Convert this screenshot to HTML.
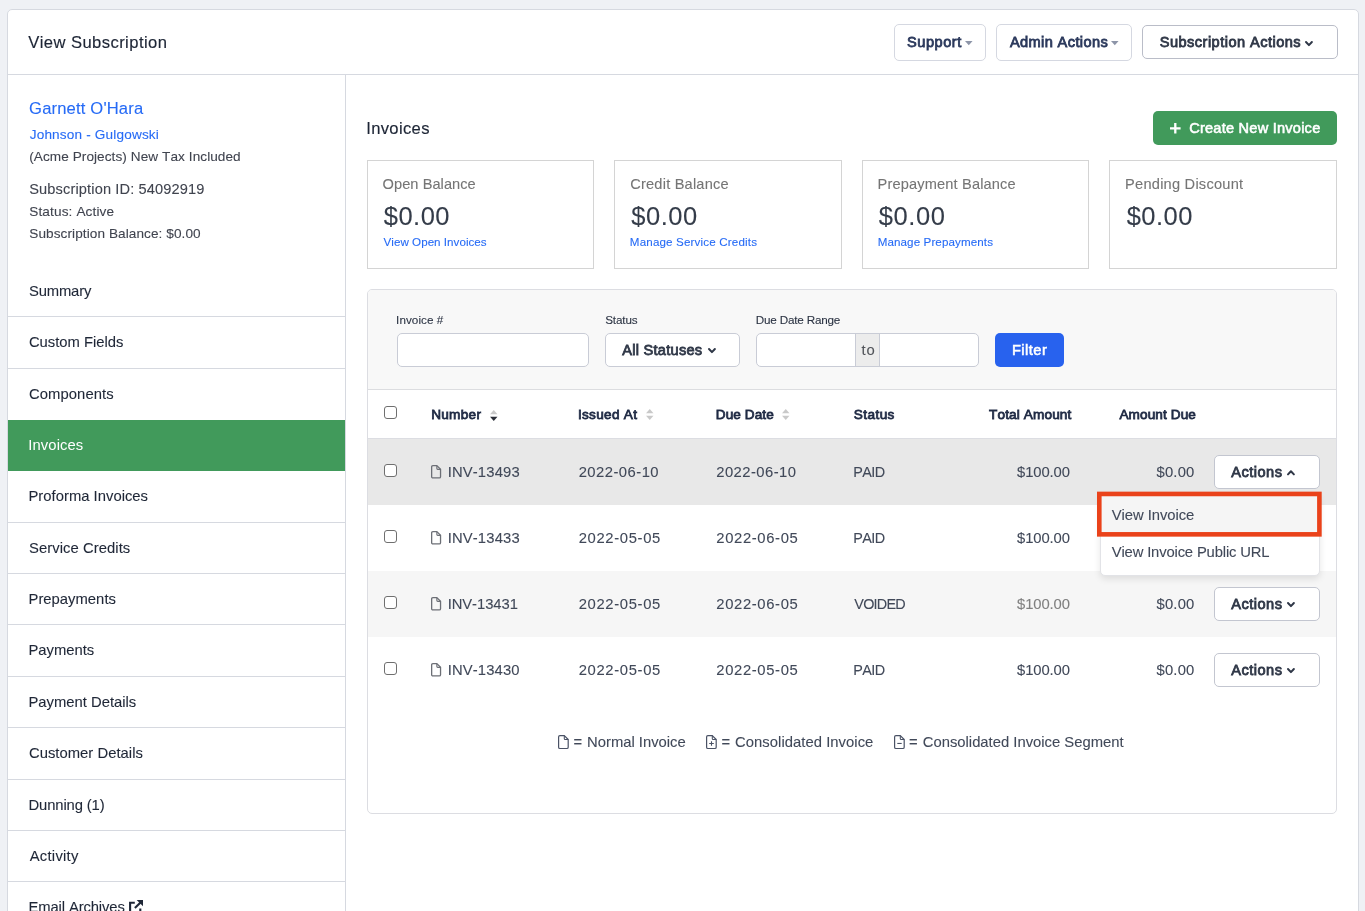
<!DOCTYPE html>
<html lang="en">
<head>
<meta charset="utf-8">
<title>View Subscription</title>
<style>
*{box-sizing:border-box;margin:0;padding:0}
html,body{width:1365px;height:911px;overflow:hidden}
body{background:#eff1f5;font-family:"Liberation Sans",sans-serif;color:#3d4556;font-size:14px;position:relative;font-kerning:none}
a{text-decoration:none}
.t{position:absolute;white-space:nowrap;-webkit-text-stroke:.1px currentColor}
#w{position:absolute;left:0;top:0;width:1365px;height:911px;overflow:hidden;will-change:transform}
svg{position:absolute;overflow:visible}
</style>
</head>
<body>
<div id="w">
<div style="position:absolute;left:7px;top:9px;width:1352.00px;height:931.00px;background:#fff;border:1px solid #d6d9e0;border-radius:5px"></div>
<div style="position:absolute;left:8px;top:74px;width:1350.00px;height:1.00px;background:#d6d9e0"></div>
<div class="t" style="left:28.25px;top:33px;font-size:16.6px;line-height:19px;letter-spacing:0.423px;color:#1d2535;-webkit-text-stroke:.15px #1d2535;">View Subscription</div>
<div style="position:absolute;left:894px;top:24px;width:92.00px;height:37.00px;background:#fff;border:1px solid #d5d8e1;border-radius:5px"></div>
<div class="t" style="left:906.99px;top:34px;font-size:14.6px;line-height:16px;letter-spacing:0.522px;color:#2b395c;-webkit-text-stroke:0.8px currentColor;">Support</div>
<svg style="left:965.4px;top:40.7px" width="7.6" height="4.2" viewBox="0 0 7.6 4.2"><path d="M0 0H7.6L3.8 4.2Z" fill="#8d95a8"/></svg>
<div style="position:absolute;left:996px;top:24px;width:136.00px;height:37.00px;background:#fff;border:1px solid #d5d8e1;border-radius:5px"></div>
<div class="t" style="left:1009.92px;top:34px;font-size:14.6px;line-height:16px;letter-spacing:0.378px;color:#2b395c;-webkit-text-stroke:0.8px currentColor;">Admin Actions</div>
<svg style="left:1111.1px;top:40.7px" width="7.6" height="4.2" viewBox="0 0 7.6 4.2"><path d="M0 0H7.6L3.8 4.2Z" fill="#8d95a8"/></svg>
<div style="position:absolute;left:1142px;top:25px;width:196.00px;height:34.00px;background:#fff;border:1px solid #babdc8;border-radius:5px"></div>
<div class="t" style="left:1159.79px;top:34px;font-size:14.6px;line-height:16px;letter-spacing:0.453px;color:#2f3747;-webkit-text-stroke:0.8px currentColor;">Subscription Actions</div>
<svg style="left:1305.3px;top:40.5px" width="7.9" height="5.4" viewBox="0 0 7.9 5.4"><path d="M1.0 1.0 L3.95 4.1000000000000005 L6.9 1.0" fill="none" stroke="#2f3747" stroke-width="2.0" stroke-linecap="round" stroke-linejoin="round"/></svg>
<div style="position:absolute;left:345px;top:75px;width:1.00px;height:836.00px;background:#d6d9e0"></div>
<a class="t" style="left:29.07px;top:99px;font-size:16.6px;line-height:19px;letter-spacing:0.162px;color:#266bf6;">Garnett O'Hara</a>
<a class="t" style="left:29.69px;top:127px;font-size:13.6px;line-height:15px;letter-spacing:0.166px;color:#266bf6;">Johnson - Gulgowski</a>
<div class="t" style="left:29.16px;top:149px;font-size:13.6px;line-height:15px;letter-spacing:0.073px;color:#40444f;">(Acme Projects) New Tax Included</div>
<div class="t" style="left:29.24px;top:181px;font-size:14.6px;line-height:16px;letter-spacing:0.133px;color:#40444f;">Subscription ID: 54092919</div>
<div class="t" style="left:29.28px;top:204px;font-size:13.6px;line-height:15px;letter-spacing:0.129px;color:#40444f;">Status: Active</div>
<div class="t" style="left:29.28px;top:226px;font-size:13.6px;line-height:15px;letter-spacing:0.080px;color:#40444f;">Subscription Balance: $0.00</div>
<div style="position:absolute;left:8px;top:316px;width:337.00px;height:1.00px;background:#d6d9e0"></div>
<div style="position:absolute;left:8px;top:368px;width:337.00px;height:1.00px;background:#d6d9e0"></div>
<div style="position:absolute;left:8px;top:522px;width:337.00px;height:1.00px;background:#d6d9e0"></div>
<div style="position:absolute;left:8px;top:573px;width:337.00px;height:1.00px;background:#d6d9e0"></div>
<div style="position:absolute;left:8px;top:624px;width:337.00px;height:1.00px;background:#d6d9e0"></div>
<div style="position:absolute;left:8px;top:676px;width:337.00px;height:1.00px;background:#d6d9e0"></div>
<div style="position:absolute;left:8px;top:727px;width:337.00px;height:1.00px;background:#d6d9e0"></div>
<div style="position:absolute;left:8px;top:779px;width:337.00px;height:1.00px;background:#d6d9e0"></div>
<div style="position:absolute;left:8px;top:830px;width:337.00px;height:1.00px;background:#d6d9e0"></div>
<div style="position:absolute;left:8px;top:881px;width:337.00px;height:1.00px;background:#d6d9e0"></div>
<div style="position:absolute;left:8px;top:420px;width:337.00px;height:51.00px;background:#419a5b"></div>
<div class="t" style="left:29.03px;top:283px;font-size:14.8px;line-height:16px;letter-spacing:-0.170px;color:#1f2737;">Summary</div>
<div class="t" style="left:28.95px;top:334px;font-size:14.8px;line-height:16px;letter-spacing:0.000px;color:#1f2737;">Custom Fields</div>
<div class="t" style="left:28.95px;top:386px;font-size:14.8px;line-height:16px;letter-spacing:0.097px;color:#1f2737;">Components</div>
<div class="t" style="left:28.28px;top:437px;font-size:14.8px;line-height:16px;letter-spacing:0.101px;color:#fff;-webkit-text-stroke:0;">Invoices</div>
<div class="t" style="left:28.49px;top:488px;font-size:14.8px;line-height:16px;letter-spacing:0.018px;color:#1f2737;">Proforma Invoices</div>
<div class="t" style="left:29.03px;top:540px;font-size:14.8px;line-height:16px;letter-spacing:0.062px;color:#1f2737;">Service Credits</div>
<div class="t" style="left:28.49px;top:591px;font-size:14.8px;line-height:16px;letter-spacing:0.025px;color:#1f2737;">Prepayments</div>
<div class="t" style="left:28.49px;top:642px;font-size:14.8px;line-height:16px;letter-spacing:-0.022px;color:#1f2737;">Payments</div>
<div class="t" style="left:28.49px;top:694px;font-size:14.8px;line-height:16px;letter-spacing:-0.000px;color:#1f2737;">Payment Details</div>
<div class="t" style="left:28.95px;top:745px;font-size:14.8px;line-height:16px;letter-spacing:0.032px;color:#1f2737;">Customer Details</div>
<div class="t" style="left:28.49px;top:797px;font-size:14.8px;line-height:16px;letter-spacing:-0.120px;color:#1f2737;">Dunning (1)</div>
<div class="t" style="left:29.67px;top:848px;font-size:14.8px;line-height:16px;letter-spacing:0.269px;color:#1f2737;">Activity</div>
<div class="t" style="left:28.49px;top:899px;font-size:14.8px;line-height:16px;letter-spacing:-0.117px;color:#1f2737;">Email Archives</div>
<svg style="left:128.9px;top:899.6px" width="14" height="14" viewBox="0 0 14 14" fill="none" stroke="#1f2737" stroke-width="2.1"><path d="M5.8 2.7H1.1V12.9H11.300V8.400"/><path d="M5.900 8.100L12.300 1.700"/><path d="M7.700 0H14V6.300Z" fill="#1f2737" stroke="none"/></svg>
<div class="t" style="left:366.19px;top:119px;font-size:16.6px;line-height:19px;letter-spacing:0.341px;color:#1d2535;-webkit-text-stroke:.15px #1d2535;">Invoices</div>
<div style="position:absolute;left:1153px;top:111px;width:184.00px;height:34.00px;background:#419a5b;border-radius:5px"></div>
<svg style="left:1170.2px;top:122.5px" width="10.6" height="10.6" viewBox="0 0 10.6 10.6"><path d="M5.3 0V10.6M0 5.3H10.6" stroke="#fff" stroke-width="2.3" fill="none"/></svg>
<div class="t" style="left:1189.18px;top:120px;font-size:14.6px;line-height:16px;letter-spacing:0.220px;color:#fff;-webkit-text-stroke:0.8px currentColor;-webkit-text-stroke:.55px #fff;">Create New Invoice</div>
<div style="position:absolute;left:367px;top:160px;width:227.00px;height:109.00px;background:#fff;border:1px solid #d4d4d4"></div>
<div class="t" style="left:382.61px;top:176px;font-size:14.6px;line-height:16px;letter-spacing:0.055px;color:#757575;">Open Balance</div>
<div class="t" style="left:383.83px;top:202px;font-size:25.5px;line-height:28px;letter-spacing:0.464px;color:#343c49;">$0.00</div>
<a class="t" style="left:383.55px;top:235px;font-size:11.6px;line-height:13px;letter-spacing:0.038px;color:#266bf6;">View Open Invoices</a>
<div style="position:absolute;left:614px;top:160px;width:228.00px;height:109.00px;background:#fff;border:1px solid #d4d4d4"></div>
<div class="t" style="left:630.26px;top:176px;font-size:14.6px;line-height:16px;letter-spacing:0.202px;color:#757575;">Credit Balance</div>
<div class="t" style="left:631.33px;top:202px;font-size:25.5px;line-height:28px;letter-spacing:0.514px;color:#343c49;">$0.00</div>
<a class="t" style="left:629.85px;top:235px;font-size:11.6px;line-height:13px;letter-spacing:0.161px;color:#266bf6;">Manage Service Credits</a>
<div style="position:absolute;left:862px;top:160px;width:227.00px;height:109.00px;background:#fff;border:1px solid #d4d4d4"></div>
<div class="t" style="left:877.50px;top:176px;font-size:14.6px;line-height:16px;letter-spacing:0.160px;color:#757575;">Prepayment Balance</div>
<div class="t" style="left:878.83px;top:202px;font-size:25.5px;line-height:28px;letter-spacing:0.564px;color:#343c49;">$0.00</div>
<a class="t" style="left:877.65px;top:235px;font-size:11.6px;line-height:13px;letter-spacing:0.111px;color:#266bf6;">Manage Prepayments</a>
<div style="position:absolute;left:1109px;top:160px;width:228.00px;height:109.00px;background:#fff;border:1px solid #d4d4d4"></div>
<div class="t" style="left:1125.10px;top:176px;font-size:14.6px;line-height:16px;letter-spacing:0.238px;color:#757575;">Pending Discount</div>
<div class="t" style="left:1126.63px;top:202px;font-size:25.5px;line-height:28px;letter-spacing:0.514px;color:#343c49;">$0.00</div>
<div style="position:absolute;left:367px;top:289px;width:970.00px;height:525.00px;background:#fff;border:1px solid #dcdde2;border-radius:5px;overflow:hidden"><div style="position:absolute;left:0;top:0;width:968px;height:100px;background:#f8f8f8;border-bottom:1px solid #dcdde0"></div><div style="position:absolute;left:0;top:148px;width:968px;height:1px;background:#dcdde2"></div><div style="position:absolute;left:0;top:149px;width:968px;height:66px;background:#e8e8e8"></div><div style="position:absolute;left:0;top:281px;width:968px;height:66px;background:#f6f6f6"></div></div>
<div class="t" style="left:396.12px;top:313px;font-size:11.7px;line-height:13px;letter-spacing:0.051px;color:#2c3444;">Invoice #</div>
<div class="t" style="left:605.17px;top:313px;font-size:11.7px;line-height:13px;letter-spacing:-0.123px;color:#2c3444;">Status</div>
<div class="t" style="left:755.74px;top:313px;font-size:11.7px;line-height:13px;letter-spacing:-0.190px;color:#2c3444;">Due Date Range</div>
<div style="position:absolute;left:397px;top:333px;width:192.00px;height:34.00px;background:#fff;border:1px solid #c9ccd6;border-radius:5px"></div>
<div style="position:absolute;left:605px;top:333px;width:135.00px;height:34.00px;background:#fff;border:1px solid #c9ccd6;border-radius:5px"></div>
<div class="t" style="left:622.22px;top:342px;font-size:14.6px;line-height:16px;letter-spacing:0.260px;color:#2f3747;-webkit-text-stroke:0.8px currentColor;">All Statuses</div>
<svg style="left:707.6px;top:347.7px" width="7.9" height="5.4" viewBox="0 0 7.9 5.4"><path d="M1.0 1.0 L3.95 4.1000000000000005 L6.9 1.0" fill="none" stroke="#2f3747" stroke-width="2.0" stroke-linecap="round" stroke-linejoin="round"/></svg>
<div style="position:absolute;left:756px;top:333px;width:223.00px;height:34.00px;background:#fff;border:1px solid #c9ccd6;border-radius:5px"></div>
<div style="position:absolute;left:855px;top:334px;width:25.00px;height:32.00px;background:#ececec;border-left:1px solid #c9ccd6;border-right:1px solid #c9ccd6"></div>
<div class="t" style="left:861.58px;top:342px;font-size:14.8px;line-height:16px;letter-spacing:0.803px;color:#505359;">to</div>
<div style="position:absolute;left:995px;top:333px;width:69.00px;height:34.00px;background:#2862ee;border-radius:5px"></div>
<div class="t" style="left:1011.93px;top:342px;font-size:14.6px;line-height:16px;letter-spacing:0.489px;color:#fff;-webkit-text-stroke:0.8px currentColor;-webkit-text-stroke:.55px #fff;">Filter</div>
<div style="position:absolute;left:384px;top:406px;width:13.00px;height:13.00px;background:#fff;border:1px solid #6f6f6f;border-radius:3px"></div>
<div class="t" style="left:431.13px;top:407px;font-size:13.6px;line-height:15px;letter-spacing:0.294px;color:#1f2a44;-webkit-text-stroke:0.8px currentColor;">Number</div>
<svg style="left:489.6px;top:409.5px" width="7.5" height="11" viewBox="0 0 7.5 11"><path d="M0 4.3H7.5L3.75 0Z" fill="#c9c9c9"/><path d="M0 6.7H7.5L3.75 11Z" fill="#2b2f38"/></svg>
<div class="t" style="left:577.89px;top:407px;font-size:13.6px;line-height:15px;letter-spacing:0.307px;color:#1f2a44;-webkit-text-stroke:0.8px currentColor;">Issued At</div>
<svg style="left:645.7px;top:409.4px" width="7.5" height="11" viewBox="0 0 7.5 11"><path d="M0 4.3H7.5L3.75 0Z" fill="#c9c9c9"/><path d="M0 6.7H7.5L3.75 11Z" fill="#c9c9c9"/></svg>
<div class="t" style="left:715.83px;top:407px;font-size:13.6px;line-height:15px;letter-spacing:0.066px;color:#1f2a44;-webkit-text-stroke:0.8px currentColor;">Due Date</div>
<svg style="left:782.2px;top:409.4px" width="7.5" height="11" viewBox="0 0 7.5 11"><path d="M0 4.3H7.5L3.75 0Z" fill="#c9c9c9"/><path d="M0 6.7H7.5L3.75 11Z" fill="#c9c9c9"/></svg>
<div class="t" style="left:853.83px;top:407px;font-size:13.6px;line-height:15px;letter-spacing:0.411px;color:#1f2a44;-webkit-text-stroke:0.8px currentColor;">Status</div>
<div class="t" style="left:989.04px;top:407px;font-size:13.6px;line-height:15px;letter-spacing:0.129px;color:#1f2a44;-webkit-text-stroke:0.8px currentColor;">Total Amount</div>
<div class="t" style="left:1119.42px;top:407px;font-size:13.6px;line-height:15px;letter-spacing:0.104px;color:#1f2a44;-webkit-text-stroke:0.8px currentColor;">Amount Due</div>
<div style="position:absolute;left:384px;top:464px;width:13.00px;height:13.00px;background:#fff;border:1px solid #6f6f6f;border-radius:3px"></div>
<svg style="left:431.1px;top:465.1px" width="10.2" height="13.6" viewBox="0 0 10.2 13.6" fill="none" stroke="#6c6f76" stroke-width="1.3" stroke-linejoin="round"><path d="M1.9500000000000002 0.65H5.877999999999999L9.549999999999999 4.322V11.649999999999999Q9.549999999999999 12.95 8.249999999999998 12.95H1.9500000000000002Q0.65 12.95 0.65 11.649999999999999V1.9500000000000002Q0.65 0.65 1.9500000000000002 0.65Z"/><path d="M5.877999999999999 0.65V3.5220000000000002Q5.877999999999999 4.322 6.677999999999999 4.322H9.549999999999999" stroke-width="1.1700000000000002"/></svg>
<div class="t" style="left:447.63px;top:464px;font-size:14.8px;line-height:16px;letter-spacing:0.158px;color:#414959;">INV-13493</div>
<div class="t" style="left:578.66px;top:464px;font-size:14.8px;line-height:16px;letter-spacing:0.469px;color:#414959;">2022-06-10</div>
<div class="t" style="left:716.26px;top:464px;font-size:14.8px;line-height:16px;letter-spacing:0.446px;color:#414959;">2022-06-10</div>
<div class="t" style="left:853.22px;top:464px;font-size:14.4px;line-height:16px;letter-spacing:-0.580px;color:#414959;">PAID</div>
<div class="t" style="left:1017.04px;top:464px;font-size:14.8px;line-height:16px;letter-spacing:-0.094px;color:#414959;">$100.00</div>
<div class="t" style="left:1156.54px;top:464px;font-size:14.8px;line-height:16px;letter-spacing:0.175px;color:#414959;">$0.00</div>
<div style="position:absolute;left:1214px;top:455px;width:106.00px;height:34.00px;background:#fff;border:1px solid #c3c6d0;border-radius:5px"></div>
<div class="t" style="left:1231.32px;top:464px;font-size:14.6px;line-height:16px;letter-spacing:0.463px;color:#2f3747;-webkit-text-stroke:0.8px currentColor;">Actions</div>
<svg style="left:1287.3px;top:469.8px" width="7.9" height="5.4" viewBox="0 0 7.9 5.4"><path d="M1.0 4.4 L3.95 1.3 L6.9 4.4" fill="none" stroke="#2f3747" stroke-width="2.0" stroke-linecap="round" stroke-linejoin="round"/></svg>
<div style="position:absolute;left:384px;top:530px;width:13.00px;height:13.00px;background:#fff;border:1px solid #6f6f6f;border-radius:3px"></div>
<svg style="left:431.1px;top:531.1px" width="10.2" height="13.6" viewBox="0 0 10.2 13.6" fill="none" stroke="#6c6f76" stroke-width="1.3" stroke-linejoin="round"><path d="M1.9500000000000002 0.65H5.877999999999999L9.549999999999999 4.322V11.649999999999999Q9.549999999999999 12.95 8.249999999999998 12.95H1.9500000000000002Q0.65 12.95 0.65 11.649999999999999V1.9500000000000002Q0.65 0.65 1.9500000000000002 0.65Z"/><path d="M5.877999999999999 0.65V3.5220000000000002Q5.877999999999999 4.322 6.677999999999999 4.322H9.549999999999999" stroke-width="1.1700000000000002"/></svg>
<div class="t" style="left:447.63px;top:530px;font-size:14.8px;line-height:16px;letter-spacing:0.158px;color:#414959;">INV-13433</div>
<div class="t" style="left:578.66px;top:530px;font-size:14.8px;line-height:16px;letter-spacing:0.662px;color:#414959;">2022-05-05</div>
<div class="t" style="left:716.26px;top:530px;font-size:14.8px;line-height:16px;letter-spacing:0.651px;color:#414959;">2022-06-05</div>
<div class="t" style="left:853.22px;top:530px;font-size:14.4px;line-height:16px;letter-spacing:-0.580px;color:#414959;">PAID</div>
<div class="t" style="left:1017.04px;top:530px;font-size:14.8px;line-height:16px;letter-spacing:-0.094px;color:#414959;">$100.00</div>
<div style="position:absolute;left:384px;top:596px;width:13.00px;height:13.00px;background:#fff;border:1px solid #6f6f6f;border-radius:3px"></div>
<svg style="left:431.1px;top:597.1px" width="10.2" height="13.6" viewBox="0 0 10.2 13.6" fill="none" stroke="#6c6f76" stroke-width="1.3" stroke-linejoin="round"><path d="M1.9500000000000002 0.65H5.877999999999999L9.549999999999999 4.322V11.649999999999999Q9.549999999999999 12.95 8.249999999999998 12.95H1.9500000000000002Q0.65 12.95 0.65 11.649999999999999V1.9500000000000002Q0.65 0.65 1.9500000000000002 0.65Z"/><path d="M5.877999999999999 0.65V3.5220000000000002Q5.877999999999999 4.322 6.677999999999999 4.322H9.549999999999999" stroke-width="1.1700000000000002"/></svg>
<div class="t" style="left:447.63px;top:596px;font-size:14.8px;line-height:16px;letter-spacing:-0.058px;color:#414959;">INV-13431</div>
<div class="t" style="left:578.66px;top:596px;font-size:14.8px;line-height:16px;letter-spacing:0.662px;color:#414959;">2022-05-05</div>
<div class="t" style="left:716.26px;top:596px;font-size:14.8px;line-height:16px;letter-spacing:0.651px;color:#414959;">2022-06-05</div>
<div class="t" style="left:854.34px;top:596px;font-size:14.4px;line-height:16px;letter-spacing:-0.751px;color:#414959;">VOIDED</div>
<div class="t" style="left:1017.04px;top:596px;font-size:14.8px;line-height:16px;letter-spacing:-0.094px;color:#808080;">$100.00</div>
<div class="t" style="left:1156.54px;top:596px;font-size:14.8px;line-height:16px;letter-spacing:0.175px;color:#414959;">$0.00</div>
<div style="position:absolute;left:1214px;top:587px;width:106.00px;height:34.00px;background:#fff;border:1px solid #c3c6d0;border-radius:5px"></div>
<div class="t" style="left:1231.32px;top:596px;font-size:14.6px;line-height:16px;letter-spacing:0.463px;color:#2f3747;-webkit-text-stroke:0.8px currentColor;">Actions</div>
<svg style="left:1287.3px;top:602.1px" width="7.9" height="5.4" viewBox="0 0 7.9 5.4"><path d="M1.0 1.0 L3.95 4.1000000000000005 L6.9 1.0" fill="none" stroke="#2f3747" stroke-width="2.0" stroke-linecap="round" stroke-linejoin="round"/></svg>
<div style="position:absolute;left:384px;top:662px;width:13.00px;height:13.00px;background:#fff;border:1px solid #6f6f6f;border-radius:3px"></div>
<svg style="left:431.1px;top:663.1px" width="10.2" height="13.6" viewBox="0 0 10.2 13.6" fill="none" stroke="#6c6f76" stroke-width="1.3" stroke-linejoin="round"><path d="M1.9500000000000002 0.65H5.877999999999999L9.549999999999999 4.322V11.649999999999999Q9.549999999999999 12.95 8.249999999999998 12.95H1.9500000000000002Q0.65 12.95 0.65 11.649999999999999V1.9500000000000002Q0.65 0.65 1.9500000000000002 0.65Z"/><path d="M5.877999999999999 0.65V3.5220000000000002Q5.877999999999999 4.322 6.677999999999999 4.322H9.549999999999999" stroke-width="1.1700000000000002"/></svg>
<div class="t" style="left:447.63px;top:662px;font-size:14.8px;line-height:16px;letter-spacing:0.149px;color:#414959;">INV-13430</div>
<div class="t" style="left:578.66px;top:662px;font-size:14.8px;line-height:16px;letter-spacing:0.662px;color:#414959;">2022-05-05</div>
<div class="t" style="left:716.26px;top:662px;font-size:14.8px;line-height:16px;letter-spacing:0.651px;color:#414959;">2022-05-05</div>
<div class="t" style="left:853.22px;top:662px;font-size:14.4px;line-height:16px;letter-spacing:-0.580px;color:#414959;">PAID</div>
<div class="t" style="left:1017.04px;top:662px;font-size:14.8px;line-height:16px;letter-spacing:-0.094px;color:#414959;">$100.00</div>
<div class="t" style="left:1156.54px;top:662px;font-size:14.8px;line-height:16px;letter-spacing:0.175px;color:#414959;">$0.00</div>
<div style="position:absolute;left:1214px;top:653px;width:106.00px;height:34.00px;background:#fff;border:1px solid #c3c6d0;border-radius:5px"></div>
<div class="t" style="left:1231.32px;top:662px;font-size:14.6px;line-height:16px;letter-spacing:0.463px;color:#2f3747;-webkit-text-stroke:0.8px currentColor;">Actions</div>
<svg style="left:1287.3px;top:668.1px" width="7.9" height="5.4" viewBox="0 0 7.9 5.4"><path d="M1.0 1.0 L3.95 4.1000000000000005 L6.9 1.0" fill="none" stroke="#2f3747" stroke-width="2.0" stroke-linecap="round" stroke-linejoin="round"/></svg>
<svg style="left:558.2px;top:734.6px" width="10.8" height="14.1" viewBox="0 0 10.8 14.1" fill="none" stroke="#4a5265" stroke-width="1.2" stroke-linejoin="round"><path d="M1.9 0.6H6.312000000000001L10.200000000000001 4.4879999999999995V12.2Q10.200000000000001 13.5 8.9 13.5H1.9Q0.6 13.5 0.6 12.2V1.9Q0.6 0.6 1.9 0.6Z"/><path d="M6.312000000000001 0.6V3.6879999999999997Q6.312000000000001 4.4879999999999995 7.112000000000001 4.4879999999999995H10.200000000000001" stroke-width="1.08"/></svg>
<div class="t" style="left:573.38px;top:734px;font-size:14.8px;line-height:16px;letter-spacing:0.000px;color:#414959;">=</div>
<div class="t" style="left:587.09px;top:734px;font-size:14.8px;line-height:16px;letter-spacing:-0.002px;color:#414959;">Normal Invoice</div>
<svg style="left:706.2px;top:734.6px" width="10.8" height="14.1" viewBox="0 0 10.8 14.1" fill="none" stroke="#4a5265" stroke-width="1.2" stroke-linejoin="round"><path d="M1.9 0.6H6.312000000000001L10.200000000000001 4.4879999999999995V12.2Q10.200000000000001 13.5 8.9 13.5H1.9Q0.6 13.5 0.6 12.2V1.9Q0.6 0.6 1.9 0.6Z"/><path d="M6.312000000000001 0.6V3.6879999999999997Q6.312000000000001 4.4879999999999995 7.112000000000001 4.4879999999999995H10.200000000000001" stroke-width="1.08"/><path d="M5.5 6.159999999999999V10.759999999999998M3.2 8.459999999999999H7.8" stroke-width="1.1"/></svg>
<div class="t" style="left:721.48px;top:734px;font-size:14.8px;line-height:16px;letter-spacing:0.000px;color:#414959;">=</div>
<div class="t" style="left:735.05px;top:734px;font-size:14.8px;line-height:16px;letter-spacing:0.048px;color:#414959;">Consolidated Invoice</div>
<svg style="left:894px;top:734.6px" width="10.8" height="14.1" viewBox="0 0 10.8 14.1" fill="none" stroke="#4a5265" stroke-width="1.2" stroke-linejoin="round"><path d="M1.9 0.6H6.312000000000001L10.200000000000001 4.4879999999999995V12.2Q10.200000000000001 13.5 8.9 13.5H1.9Q0.6 13.5 0.6 12.2V1.9Q0.6 0.6 1.9 0.6Z"/><path d="M6.312000000000001 0.6V3.6879999999999997Q6.312000000000001 4.4879999999999995 7.112000000000001 4.4879999999999995H10.200000000000001" stroke-width="1.08"/><path d="M3.3 8.459999999999999H7.7" stroke-width="1.1"/></svg>
<div class="t" style="left:909.08px;top:734px;font-size:14.8px;line-height:16px;letter-spacing:0.000px;color:#414959;">=</div>
<div class="t" style="left:922.75px;top:734px;font-size:14.8px;line-height:16px;letter-spacing:0.004px;color:#414959;">Consolidated Invoice Segment</div>
<div style="position:absolute;left:1100px;top:493px;width:220.00px;height:82.50px;background:#fff;border:1px solid #e2e3e7;border-radius:5px;box-shadow:0 3px 7px rgba(0,0,0,.10)"></div>
<svg style="left:1096px;top:490px" width="228" height="48" viewBox="0 0 228 48"><rect x="3.3" y="3.95" width="220.1" height="40.4" fill="#f5f5f5" stroke="#ea421a" stroke-width="4.6"/></svg>
<div class="t" style="left:1111.73px;top:507px;font-size:14.8px;line-height:16px;letter-spacing:-0.042px;color:#414959;">View Invoice</div>
<div class="t" style="left:1111.73px;top:544px;font-size:14.8px;line-height:16px;letter-spacing:-0.153px;color:#414959;">View Invoice Public URL</div>
</div>
</body>
</html>
